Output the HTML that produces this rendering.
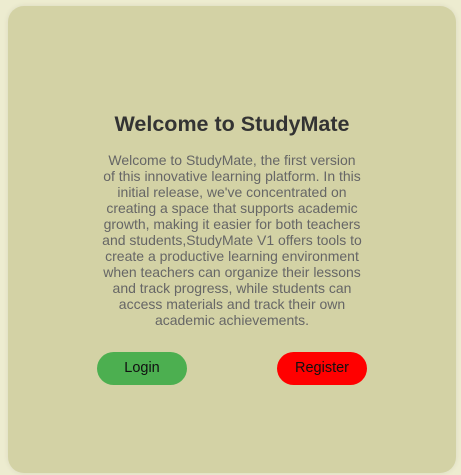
<!DOCTYPE html>
<html><head><meta charset="utf-8"><style>
html,body{margin:0;padding:0;width:461px;height:475px;overflow:hidden;}
body{background:#edecd0;font-family:"Liberation Sans",Arial,sans-serif;position:relative;}
.card{position:absolute;left:8px;top:6px;width:448px;height:467px;background:#d3d2a5;border-radius:16px;box-shadow:0 0 6px rgba(0,0,0,0.08);}
h1{position:absolute;left:0;width:464px;top:111px;margin:0;text-align:center;font-size:21.5px;font-weight:bold;color:#333;line-height:26px;}
p{position:absolute;left:0;width:464px;top:152px;margin:0;text-align:center;font-size:14px;line-height:16px;color:#666;}
.btn{position:absolute;top:352px;width:90px;height:33px;border-radius:17px;text-align:center;line-height:33px;font-size:14.5px;color:#111;}
</style></head><body>
<div class="card"></div>
<h1>Welcome to StudyMate</h1>
<p>Welcome to StudyMate, the first version<br>of this innovative learning platform. In this<br>initial release, we've concentrated on<br>creating a space that supports academic<br>growth, making it easier for both teachers<br>and students,StudyMate V1 offers tools to<br>create a productive learning environment<br>when teachers can organize their lessons<br>and track progress, while students can<br>access materials and track their own<br>academic achievements.</p>
<div class="btn" style="left:97px;background:#4caf50;">Login</div>
<div class="btn" style="left:277px;background:#ff0000;">Register</div>
</body></html>
